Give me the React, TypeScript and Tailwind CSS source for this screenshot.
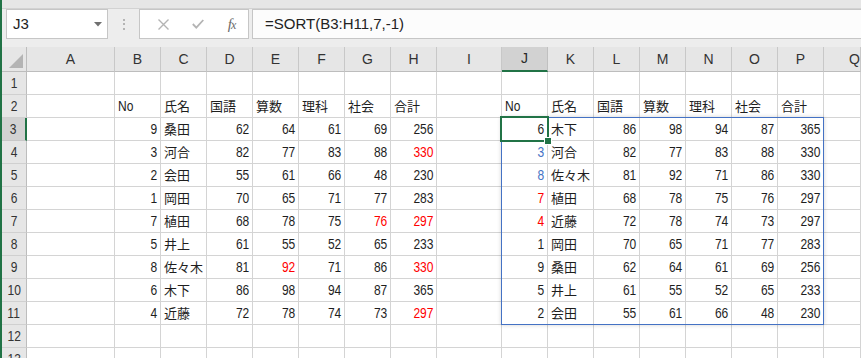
import React from "react";

// Excel風シート — SORT関数のスピル結果

const COLS = ["A", "B", "C", "D", "E", "F", "G", "H", "I", "J", "K", "L", "M", "N", "O", "P", "Q"];
const HEADERS = ["No", "氏名", "国語", "算数", "理科", "社会", "合計"];

type Row = (string | number)[];

const LEFT: Row[] = [
  [9, "桑田", 62, 64, 61, 69, 256],
  [3, "河合", 82, 77, 83, 88, 330],
  [2, "会田", 55, 61, 66, 48, 230],
  [1, "岡田", 70, 65, 71, 77, 283],
  [7, "植田", 68, 78, 75, 76, 297],
  [5, "井上", 61, 55, 52, 65, 233],
  [8, "佐々木", 81, 92, 71, 86, 330],
  [6, "木下", 86, 98, 94, 87, 365],
  [4, "近藤", 72, 78, 74, 73, 297],
];

const RIGHT: Row[] = [
  [6, "木下", 86, 98, 94, 87, 365],
  [3, "河合", 82, 77, 83, 88, 330],
  [8, "佐々木", 81, 92, 71, 86, 330],
  [7, "植田", 68, 78, 75, 76, 297],
  [4, "近藤", 72, 78, 74, 73, 297],
  [1, "岡田", 70, 65, 71, 77, 283],
  [9, "桑田", 62, 64, 61, 69, 256],
  [5, "井上", 61, 55, 52, 65, 233],
  [2, "会田", 55, 61, 66, 48, 230],
];

// 色付きセル "row,col"
const RED = new Set(["4,7", "7,7", "9,7", "11,7", "7,6", "9,4", "6,9", "7,9"]);
const BLUE = new Set(["4,9", "5,9"]);

type Cell = { v: string | number; color?: string } | null;

function getCell(row: number, col: number): Cell {
  // col: 0 = A
  if (row === 2) {
    if (col >= 1 && col <= 7) return { v: HEADERS[col - 1] };
    if (col >= 9 && col <= 15) return { v: HEADERS[col - 9] };
    return null;
  }
  if (row >= 3 && row <= 11) {
    let v: string | number | undefined;
    if (col >= 1 && col <= 7) v = LEFT[row - 3][col - 1];
    if (col >= 9 && col <= 15) v = RIGHT[row - 3][col - 9];
    if (v === undefined) return null;
    const key = `${row},${col}`;
    const color = RED.has(key) ? "text-[#ff0000]" : BLUE.has(key) ? "text-[#4472c4]" : "text-[#1e1e1e]";
    return { v, color };
  }
  return null;
}

function CellView({ row, col }: { row: number; col: number }) {
  const cell = getCell(row, col);
  const isNum = cell && typeof cell.v === "number";
  return (
    <div
      className={`border-r border-b border-[#d4d4d4] flex items-end pb-[3px] px-[3px] overflow-hidden whitespace-nowrap ${
        isNum ? "justify-end" : "justify-start"
      } ${cell?.color ?? "text-[#1e1e1e]"}`}
    >
      {cell &&
        (typeof cell.v === "number" ? (
          <span className="inline-block leading-none scale-x-[0.82] origin-right">{cell.v}</span>
        ) : cell.v === "No" ? (
          <span className="inline-block leading-none scale-x-[0.82] origin-left">{cell.v}</span>
        ) : (
          <span className="leading-none mb-[2px] text-[13px] font-['Noto_Sans_CJK_JP',sans-serif]">{cell.v}</span>
        ))}
    </div>
  );
}

function FormulaBar() {
  return (
    <div className="h-[47px] flex flex-col bg-[#ededed]">
      <div className="h-[9px] bg-[#e6e6e6] border-b border-[#d2d2d2]" />
      <div className="flex items-start h-[38px] font-['Liberation_Sans',Arial,sans-serif]">
        {/* 名前ボックス */}
        <div className="ml-[4px] w-[102px] h-[30px] bg-white border border-[#c6c6c6] flex items-center pl-[6px] pr-[5px]">
          <span className="text-[15px] text-[#222] flex-1">J3</span>
          <svg width="8" height="5" viewBox="0 0 8 5">
            <path d="M0 0 L8 0 L4 4.5 Z" fill="#707070" />
          </svg>
        </div>
        <div className="w-[31px] h-[30px] flex flex-col items-center justify-center gap-[2.5px]">
          <div className="w-[2px] h-[2px] bg-[#b4b4b4]" />
          <div className="w-[2px] h-[2px] bg-[#b4b4b4]" />
          <div className="w-[2px] h-[2px] bg-[#b4b4b4]" />
        </div>
        {/* キャンセル / 確定 / 関数 */}
        <div className="w-[110px] h-[30px] bg-white border border-[#c6c6c6] flex items-center">
          <div className="w-[40px] flex justify-center pl-[6px]">
            <svg width="11" height="11" viewBox="0 0 11 11">
              <path d="M0.5 0.5 L10.5 10.5 M10.5 0.5 L0.5 10.5" stroke="#b4b4b4" strokeWidth="1.4" />
            </svg>
          </div>
          <div className="w-[35px] flex justify-center">
            <svg width="12" height="10" viewBox="0 0 12 10">
              <path d="M0.8 5 L4.3 8.6 L11.3 1" stroke="#b4b4b4" strokeWidth="1.8" fill="none" />
            </svg>
          </div>
          <div className="w-[33px] flex justify-center">
            <span className="font-['Liberation_Serif',serif] italic text-[15px] text-[#6a6a6a] tracking-[-1px]">
              f<span className="text-[12px]">x</span>
            </span>
          </div>
        </div>
        <div className="ml-[3px] flex-1 h-[30px] bg-[#fcfcfc] border-y border-l border-[#c6c6c6] flex items-center pl-[12px]">
          <span className="text-[15px] text-[#222]">=SORT(B3:H11,7,-1)</span>
        </div>
      </div>
    </div>
  );
}

function Sheet() {
  const rows = Array.from({ length: 13 }, (_, i) => i + 1);
  return (
    <div className="relative flex-1 overflow-hidden">
      <div className="grid grid-cols-[25px_88px_46px_46px_46px_46px_46px_46px_46px_65px_46px_46px_46px_46px_46px_46px_46px_1fr] grid-rows-[25px_repeat(13,23px)] text-[14.67px] font-['Liberation_Sans','Noto_Sans_CJK_JP',sans-serif]">
        {/* 全選択コーナー */}
        <div className="bg-[#e6e6e6] border-r border-b border-[#bdbdbd] flex items-end justify-end pr-[3px] pb-[3px]">
          <svg width="14" height="14" viewBox="0 0 14 14">
            <path d="M14 0 L14 14 L0 14 Z" fill="#b4b4b4" />
          </svg>
        </div>
        {COLS.map((c) => (
          <div
            key={c}
            className={`flex items-center justify-center font-['Liberation_Sans',sans-serif] text-[14px] ${
              c === "J"
                ? "bg-[#d2d2d2] border-r border-r-[#c0c0c0] border-b-2 border-b-[#217346] text-[#2a2a2a]"
                : "bg-[#e6e6e6] border-r border-b border-r-[#c8c8c8] border-b-[#bdbdbd] text-[#333]"
            } ${c === "Q" ? "justify-start pl-[25px]" : ""}`}
          >
            {c}
          </div>
        ))}
        {rows.map((r) => (
          <React.Fragment key={r}>
            <div
              className={`flex items-end justify-center pb-[3px] text-[#333] ${
                r === 3
                  ? "bg-[#d2d2d2] border-r-2 border-r-[#217346] border-b border-b-[#c8c8c8]"
                  : "bg-[#e6e6e6] border-r border-b border-r-[#bdbdbd] border-b-[#d0d0d0]"
              }`}
            >
              <span className="inline-block leading-none scale-x-[0.82]">{r}</span>
            </div>
            {COLS.map((_, ci) => (
              <CellView key={ci} row={r} col={ci} />
            ))}
          </React.Fragment>
        ))}
      </div>

      {/* スピル範囲 J3:P11 */}
      <div className="absolute left-[499px] top-[70px] w-[323px] h-[208px] border border-[#4472c4] shadow-[0_0_4px_rgba(0,0,0,0.18)] pointer-events-none" />
      {/* 選択セル J3 */}
      <div className="absolute left-[498px] top-[69px] w-[49px] h-[26px] border-2 border-[#217346] pointer-events-none" />
      <div className="absolute left-[543px] top-[91px] w-[6px] h-[6px] bg-[#217346] outline outline-1 outline-white pointer-events-none" />
    </div>
  );
}

export default function App() {
  return (
    <div className="w-[861px] h-[358px] overflow-hidden bg-white border-l-2 border-[#217346] flex flex-col">
      <FormulaBar />
      <Sheet />
    </div>
  );
}
